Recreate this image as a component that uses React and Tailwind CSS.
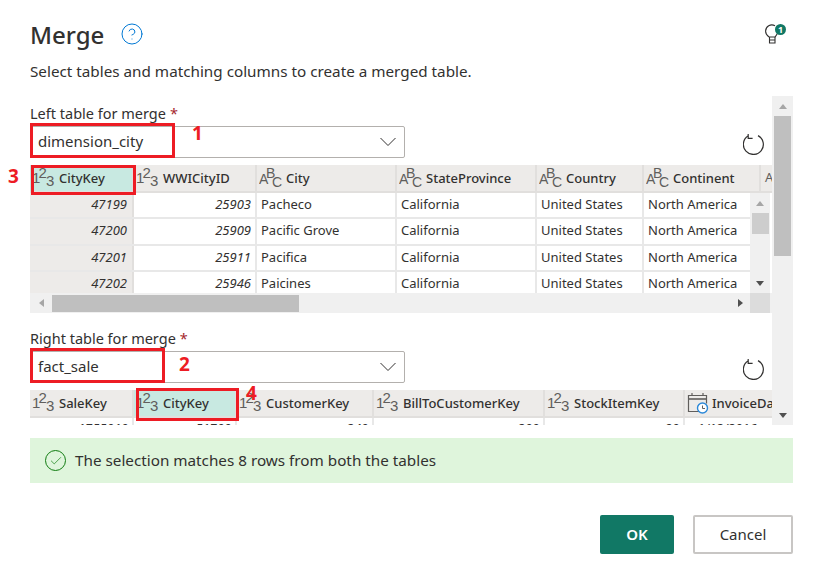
import React from "react";
import { Check, CircleHelp } from "lucide-react";

const FONT = "font-['Noto_Sans','Open_Sans',sans-serif]";

/* ---------- type icons ---------- */
function NumIcon() {
  return (
    <svg width="24" height="24" viewBox="0 0 24 24" className="shrink-0" fill="#605e5c" fontFamily="Liberation Sans, sans-serif">
      <text x="0" y="17" fontSize="15">1</text>
      <text x="6.500" y="12" fontSize="15">2</text>
      <text x="14" y="20" fontSize="15">3</text>
    </svg>
  );
}

function TextIcon() {
  return (
    <svg width="24" height="24" viewBox="0 0 24 24" className="shrink-0" fill="#605e5c" fontFamily="Liberation Sans, sans-serif">
      <text x="0" y="18" fontSize="14">A</text>
      <text x="7" y="12" fontSize="14">B</text>
      <text x="13" y="21" fontSize="14">C</text>
    </svg>
  );
}

function DateIcon() {
  return (
    <svg width="22" height="22" viewBox="0 0 22 22" className="shrink-0" fill="none">
      <path d="M14 19.5H1.500V3.500h18v8" stroke="#605e5c" strokeWidth="1.2" />
      <path d="M1.500 7h18" stroke="#605e5c" strokeWidth="1.6" />
      <path d="M5 1v3M16 1v3" stroke="#605e5c" strokeWidth="1.2" />
      <circle cx="15.500" cy="16" r="5" fill="#fff" stroke="#2b88d8" strokeWidth="1.4" />
      <path d="M15.500 13.500V16.500H18" stroke="#605e5c" strokeWidth="1" />
    </svg>
  );
}

function RefreshIcon() {
  return (
    <svg width="22" height="22" viewBox="0 0 22 22" fill="none" stroke="#323130" strokeWidth="1.2" className="shrink-0">
      <path d="M15 2.600a10 10 0 1 1-10 .4" />
      <path d="M5.200 1v4.400h4.400" />
    </svg>
  );
}

function Bulb() {
  return (
    <div className="relative w-[21px] h-[20px]">
      <svg width="14" height="20" viewBox="0 0 14 20" fill="none" stroke="#323130" strokeWidth="1.1">
        <path d="M4 13C2 11.500 .6 10 .6 7.200a6.200 6.200 0 0 1 9.400-5.400" />
        <path d="M12.800 8c-.2 2.400-1.600 3.500-2.800 5H4" />
        <path d="M4.500 13v6h5.500v-6M4.500 16h5.500" />
      </svg>
      <div className="absolute left-[10px] top-0 w-[11px] h-[11px] rounded-full bg-[#117865] text-white text-[9px] font-bold leading-[11px] text-center">
        1
      </div>
    </div>
  );
}

function Chevron() {
  return (
    <svg width="16" height="10" viewBox="0 0 16 10" fill="none" stroke="#323130" strokeWidth="1" className="shrink-0">
      <path d="M.5 1 8 8.500 15.500 1" />
    </svg>
  );
}

/* ---------- table bits ---------- */
const ICONS = { num: NumIcon, text: TextIcon, date: DateIcon };

function HeaderCell({ col, selected }) {
  const Icon = ICONS[col.type];
  return (
    <div
      className={`h-full shrink-0 flex items-center gap-[3px] pl-[2px] overflow-hidden border-r-2 border-[#e1dfdd] ${selected ? "bg-[#c8e9e1]" : ""}`}
      style={{ width: col.w }}
    >
      <Icon />
      <span className="text-[13px] font-medium text-[#323130] whitespace-nowrap pt-[1px]">{col.name}</span>
    </div>
  );
}

function SelectBox({ value }) {
  return (
    <div className="w-[375px] h-[32px] flex items-center justify-between pl-[7px] pr-[8px] border border-[#b3b0ad] rounded-[2px] bg-white">
      <span className="text-[15px] leading-[28px] pb-[2px] text-[#323130]">{value}</span>
      <Chevron />
    </div>
  );
}

function Label({ children }) {
  return (
    <div className="h-[20px] flex items-center text-[14.500px] text-[#323130] leading-none">
      {children}
      <span className="text-[#a4262c] ml-[4px]">*</span>
    </div>
  );
}

const ARROW_UP = "w-0 h-0 border-x-[4px] border-x-transparent border-b-[5px] border-b-[#a6a6a6]";
const ARROW_DOWN = "w-0 h-0 border-x-[4px] border-x-transparent border-t-[5px] border-t-[#505050]";

const leftCols = [
  { name: "CityKey", type: "num", w: 104 },
  { name: "WWICityID", type: "num", w: 123 },
  { name: "City", type: "text", w: 140 },
  { name: "StateProvince", type: "text", w: 140 },
  { name: "Country", type: "text", w: 107 },
  { name: "Continent", type: "text", w: 117 },
];

const leftRows = [
  ["47199", "25903", "Pacheco"],
  ["47200", "25909", "Pacific Grove"],
  ["47201", "25911", "Pacifica"],
  ["47202", "25946", "Paicines"],
];

const rightCols = [
  { name: "SaleKey", type: "num", w: 104 },
  { name: "CityKey", type: "num", w: 103 },
  { name: "CustomerKey", type: "num", w: 137 },
  { name: "BillToCustomerKey", type: "num", w: 171 },
  { name: "StockItemKey", type: "num", w: 140 },
  { name: "InvoiceDate", type: "date", w: 100 },
];

function LeftTable() {
  return (
    <div className="w-[742px] h-[148px] overflow-hidden flex flex-col bg-[#f0f0f0]">
      <div className="h-[28px] shrink-0 flex bg-[#edebe9] border-b-2 border-[#e1dfdd]">
        {leftCols.map((c, i) => (
          <HeaderCell key={c.name} col={c} selected={i === 0} />
        ))}
        <span className="pl-[4px] self-center text-[13px] text-[#605e5c]">A</span>
      </div>
      <div className="h-[100px] shrink-0 flex overflow-hidden bg-white">
        <div className="w-[720px] shrink-0 overflow-hidden">
          {leftRows.map((r) => (
            <div key={r[0]} className="h-[26.33px] flex border-b-2 border-[#e8e8e8] text-[13px] text-[#323130] leading-[22px]">
              <div className="w-[104px] shrink-0 bg-[#edebe9] border-r-2 border-[#e1dfdd] pr-[5px] text-right italic">{r[0]}</div>
              <div className="w-[123px] shrink-0 border-r-2 border-[#e8e8e8] pr-[4px] text-right italic">{r[1]}</div>
              <div className="w-[140px] shrink-0 border-r-2 border-[#e8e8e8] pl-[4px]">{r[2]}</div>
              <div className="w-[140px] shrink-0 border-r-2 border-[#e8e8e8] pl-[4px]">California</div>
              <div className="w-[107px] shrink-0 border-r-2 border-[#e8e8e8] pl-[4px]">United States</div>
              <div className="w-[106px] shrink-0 pl-[4px] whitespace-nowrap">North America</div>
            </div>
          ))}
        </div>
        <div className="w-[20px] shrink-0 bg-[#f0f0f0] flex flex-col items-center">
          <div className="h-[20px] flex items-center justify-center"><div className={ARROW_UP} /></div>
          <div className="w-[17px] h-[21px] bg-[#cdcdcd]" />
          <div className="flex-1" />
          <div className="h-[20px] flex items-center justify-center"><div className={ARROW_DOWN} /></div>
        </div>
      </div>
      <div className="h-[20px] shrink-0 flex bg-[#f0f0f0]">
        <div className="w-[720px] shrink-0 flex items-center">
          <div className="w-[22px] flex justify-center">
            <div className="w-0 h-0 border-y-[4px] border-y-transparent border-r-[5px] border-r-[#a6a6a6]" />
          </div>
          <div className="w-[247px] h-[17px] bg-[#bfbfbf]" />
          <div className="flex-1" />
          <div className="w-[20px] flex justify-center">
            <div className="w-0 h-0 border-y-[4px] border-y-transparent border-l-[5px] border-l-[#505050]" />
          </div>
        </div>
        <div className="w-[20px] h-[20px] bg-[#dcdcdc]" />
      </div>
    </div>
  );
}

function RightTable() {
  return (
    <div className="w-[742px] h-[35px] overflow-hidden flex flex-col">
      <div className="h-[28px] shrink-0 flex bg-[#edebe9] border-b-2 border-[#e1dfdd]">
        {rightCols.map((c, i) => (
          <HeaderCell key={c.name} col={c} selected={i === 1} />
        ))}
      </div>
      <div className="flex text-[13px] text-[#323130] leading-[20px]">
        <div className="w-[104px] shrink-0 border-r-2 border-[#e8e8e8] pr-[4px] text-right italic">1755010</div>
        <div className="w-[103px] shrink-0 border-r-2 border-[#e8e8e8] pr-[4px] text-right italic">51700</div>
        <div className="w-[137px] shrink-0 border-r-2 border-[#e8e8e8] pr-[4px] text-right italic">340</div>
        <div className="w-[171px] shrink-0 border-r-2 border-[#e8e8e8] pr-[4px] text-right italic">300</div>
        <div className="w-[140px] shrink-0 border-r-2 border-[#e8e8e8] pr-[4px] text-right italic">90</div>
        <div className="pl-[12px] italic">1/12/2016</div>
      </div>
    </div>
  );
}

/* ---------- red marks laid over the picture ---------- */
function Mark({ className }) {
  return <div className={`absolute border-[3px] border-[#ed1c24] ${className}`} />;
}

function Num({ className, children }) {
  return <div className={`absolute text-[19px] leading-none font-bold text-[#ed1c24] ${className}`}>{children}</div>;
}

export default function App() {
  return (
    <div className={`relative w-[820px] h-[573px] bg-white overflow-hidden flex flex-col pl-[30px] pr-[27px] ${FONT}`}>
      {/* Title */}
      <div className="h-[71px] shrink-0 flex items-start pt-[19px] pr-[7px]">
        <h1 className="text-[24px] leading-[32px] font-medium text-[#323130]">Merge</h1>
        <CircleHelp size={24} strokeWidth={1} color="#0078d4" className="ml-[16px] mt-[3px]" />
        <div className="flex-1" />
        <div className="mt-[5px]"><Bulb /></div>
      </div>
      <p className="h-[25px] shrink-0 text-[15.250px] leading-[0px] text-[#323130]">Select tables and matching columns to create a merged table.</p>

      {/* Scrolling form */}
      <div className="h-[329px] shrink-0 flex overflow-hidden">
        <div className="w-[742px] shrink-0 flex flex-col pt-[7px]">
          <Label>Left table for merge</Label>
          <div className="mt-[3px] flex items-center justify-between">
            <SelectBox value="dimension_city" />
            <div className="mt-[3px] mr-[7px]"><RefreshIcon /></div>
          </div>
          <div className="mt-[7px]"><LeftTable /></div>
          <div className="mt-[15px]"><Label>Right table for merge</Label></div>
          <div className="mt-[3px] flex items-center justify-between">
            <SelectBox value="fact_sale" />
            <div className="mt-[3px] mr-[7px]"><RefreshIcon /></div>
          </div>
          <div className="mt-[7px]"><RightTable /></div>
        </div>
        <div className="w-[21px] shrink-0 bg-[#f0f0f0] flex flex-col items-center">
          <div className="h-[20px] flex items-center justify-center"><div className={ARROW_UP} /></div>
          <div className="w-[17px] h-[140px] bg-[#bfbfbf]" />
          <div className="flex-1" />
          <div className="h-[20px] flex items-center justify-center"><div className={ARROW_DOWN} /></div>
        </div>
      </div>

      {/* Match result */}
      <div className="mt-[13px] h-[45px] shrink-0 flex items-center gap-[9px] pl-[15px] bg-[#dff5dc]">
        <div className="w-[21px] h-[21px] rounded-full border border-[#107c10] flex items-center justify-center">
          <Check size={14} strokeWidth={1.2} color="#107c10" />
        </div>
        <span className="text-[15.250px] text-[#323130]">The selection matches 8 rows from both the tables</span>
      </div>

      {/* Actions */}
      <div className="mt-[32px] flex justify-end gap-[19px]">
        <button className="w-[74px] h-[39px] rounded-[2px] bg-[#117865] text-white text-[15px] font-semibold">OK</button>
        <button className="w-[100px] h-[39px] rounded-[2px] bg-white border-2 border-[#c8c6c4] text-[15px] text-[#323130]">Cancel</button>
      </div>

      <Mark className="left-[30px] top-[123px] w-[145px] h-[35px]" />
      <Mark className="left-[31px] top-[165px] w-[105px] h-[30px]" />
      <Mark className="left-[30px] top-[348px] w-[135px] h-[35px]" />
      <Mark className="left-[136px] top-[388px] w-[103px] h-[33px]" />
      <Num className="left-[192px] top-[124px]">1</Num>
      <Num className="left-[8px] top-[167px]">3</Num>
      <Num className="left-[179px] top-[355px]">2</Num>
      <Num className="left-[246px] top-[384px]">4</Num>
    </div>
  );
}
